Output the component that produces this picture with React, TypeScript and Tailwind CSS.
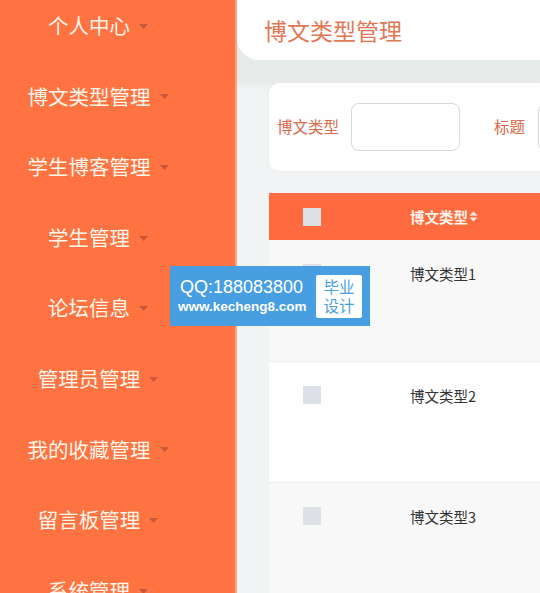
import React from "react";

const menu = [
  "个人中心",
  "博文类型管理",
  "学生博客管理",
  "学生管理",
  "论坛信息",
  "管理员管理",
  "我的收藏管理",
  "留言板管理",
  "系统管理",
];

const rows = [
  { name: "博文类型1", bg: "bg-[#f8f8f8]" },
  { name: "博文类型2", bg: "bg-[#fefefe]" },
  { name: "博文类型3", bg: "bg-[#f8f8f8]" },
];

function Caret() {
  return (
    <svg width="9" height="5" viewBox="0 0 9 5" className="ml-[9px] mt-[2px] shrink-0">
      <path d="M0 0 L9 0 L4.5 5 Z" fill="#c9573a" />
    </svg>
  );
}

export default function App() {
  return (
    <div className="relative w-[540px] h-[593px] overflow-hidden flex font-['Noto_Sans_CJK_SC',sans-serif] bg-[#f1f3f5]">
      <aside className="w-[237px] shrink-0 bg-[#fe7341] border-r-2 border-[#f6a488]">
        <div className="w-[196px] mt-[-10px] flex flex-col">
          {menu.map((m) => (
            <div key={m} className="h-[70.6px] flex items-center justify-center">
              <span className="text-[20.5px] text-[#fff6ea] leading-none whitespace-nowrap">{m}</span>
              <Caret />
            </div>
          ))}
        </div>
      </aside>
      <main className="flex-1 min-w-0 overflow-hidden flex flex-col bg-[linear-gradient(to_bottom,#e6eae9_0px,#e6eae9_80px,#f1f3f5_90px)]">
        <header className="h-[60px] shrink-0 bg-[#fefefe] rounded-bl-[22px] pl-[27px] flex items-center">
          <span className="text-[23px] text-[#e27756] leading-none whitespace-nowrap">博文类型管理</span>
        </header>
        <div className="pl-[32px] pt-[23px] flex flex-col">
          <div className="h-[88px] bg-[#fefefe] rounded-l-[10px] shadow-[0_0_4px_rgba(0,0,0,0.04)] flex items-center pl-[8px] overflow-hidden">
            <span className="text-[15.5px] text-[#d9694a] whitespace-nowrap shrink-0">博文类型</span>
            <div className="ml-[12px] w-[109px] h-[48px] rounded-[8px] border border-[#d8d8d8] bg-white shrink-0" />
            <span className="ml-[34px] text-[15.5px] text-[#d9694a] whitespace-nowrap shrink-0">标题</span>
            <div className="ml-[13px] w-[109px] h-[48px] rounded-[8px] border border-[#d8d8d8] bg-white shrink-0" />
          </div>
          <div className="mt-[22px] flex flex-col">
            <div className="h-[47px] bg-[#ff6a3e] flex items-center">
              <div className="w-[86px] flex justify-center shrink-0">
                <div className="w-[18px] h-[18px] bg-[#dde1e7]" />
              </div>
              <div className="ml-[55px] flex items-center shrink-0">
                <span className="text-[14.5px] font-bold text-[#fff4ec] whitespace-nowrap">博文类型</span>
                <svg width="9" height="11" viewBox="0 0 9 11" className="ml-[1px]">
                  <path d="M0.5 4.5 L4.5 0.5 L8.5 4.5 Z" fill="#fff4ec" />
                  <path d="M0.5 6.5 L4.5 10.5 L8.5 6.5 Z" fill="#fff4ec" />
                </svg>
              </div>
            </div>
            {rows.map((r) => (
              <div key={r.name} className={`h-[121.5px] ${r.bg} border-b border-[#efefef] flex items-start pt-[24px]`}>
                <div className="w-[86px] flex justify-center shrink-0">
                  <div className="w-[18px] h-[18px] bg-[#dde1e7]" />
                </div>
                <span className="ml-[55px] text-[14.5px] text-[#333] leading-[18px] mt-[1px] whitespace-nowrap">{r.name}</span>
              </div>
            ))}
          </div>
        </div>
      </main>

      <div className="absolute left-[170px] top-[266px] w-[200px] h-[60px] bg-[#479ee0] flex items-center">
        <div className="ml-[8px] w-[134px] flex flex-col font-['Liberation_Sans',sans-serif] text-white">
          <span className="text-[18px] leading-[22px] ml-[2px] whitespace-nowrap">QQ:188083800</span>
          <span className="text-[13.5px] font-bold leading-[18px] whitespace-nowrap">www.kecheng8.com</span>
        </div>
        <div className="ml-auto mr-[8px] w-[46px] h-[43px] bg-white rounded-[2px] flex flex-col items-center justify-center text-[#479ee0] text-[15.5px] leading-[19px]">
          <span>毕业</span>
          <span>设计</span>
        </div>
      </div>
    </div>
  );
}
